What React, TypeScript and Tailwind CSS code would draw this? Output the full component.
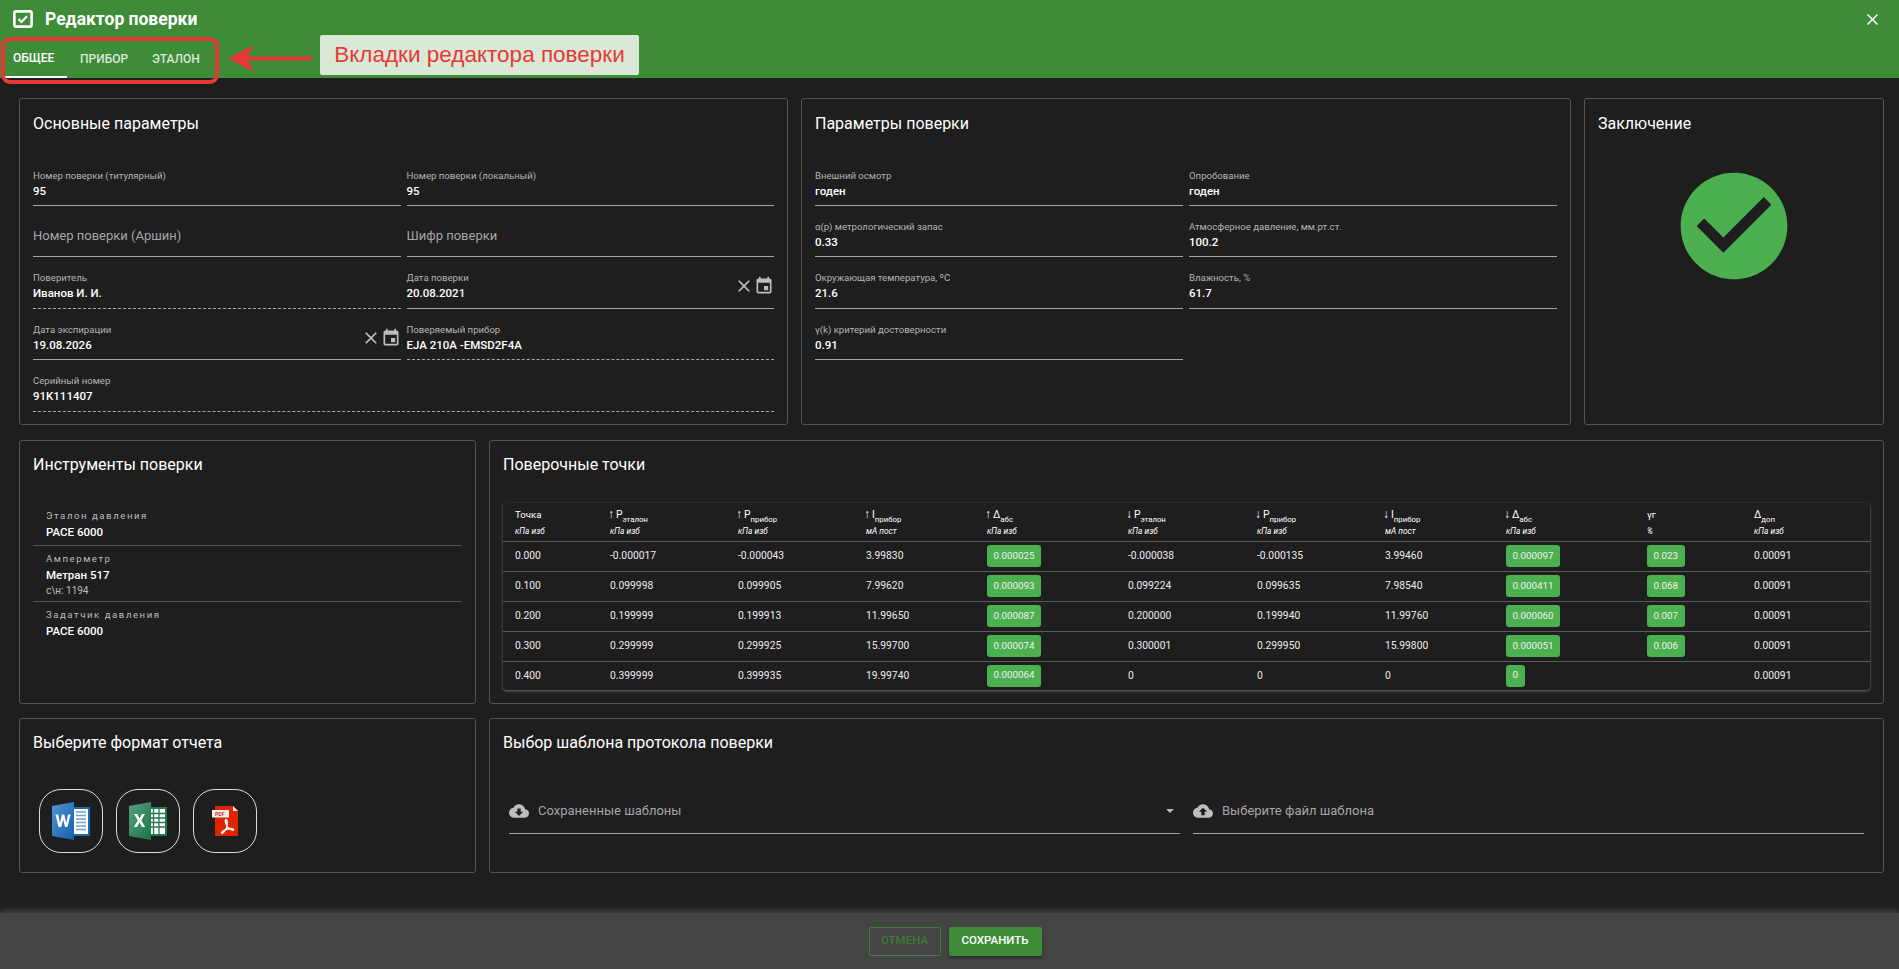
import React from "react";

const P = ({ className = "", title, children }: { className?: string; title: string; children?: React.ReactNode }) => (
  <section className={"rounded-[3px] border border-[#555555] px-[13px] " + className}>
    <h2 className="text-[16px] leading-[24px] text-white">{title}</h2>
    {children}
  </section>
);

const Clear = () => (
  <svg viewBox="0 0 24 24" className="h-[20px] w-[20px]" fill="#bdbdbd">
    <path d="M19 6.41 17.59 5 12 10.59 6.41 5 5 6.41 10.59 12 5 17.59 6.41 19 12 13.41 17.59 19 19 17.59 13.41 12z" />
  </svg>
);
const Cal = () => (
  <svg viewBox="0 0 24 24" className="h-[20px] w-[20px]" fill="#bdbdbd">
    <path d="M17 12h-5v5h5v-5zM16 1v2H8V1H6v2H5c-1.11 0-1.99.9-1.99 2L3 19c0 1.1.89 2 2 2h14c1.1 0 2-.9 2-2V5c0-1.1-.9-2-2-2h-1V1h-2zm3 18H5V8h14v11z" />
  </svg>
);

const F = ({ label, value, dashed, date, big, wide }: { label: string; value?: string; dashed?: boolean; date?: boolean; big?: boolean; wide?: boolean }) => (
  <div
    className={
      "relative h-[51.4px] border-b " +
      (dashed ? "border-dashed border-[#a8a8a8] " : "border-[#a3a3a3] ") +
      (wide ? "col-span-2" : "")
    }
  >
    {big ? (
      <div className="pt-[20px] text-[13px] leading-[20px] text-[#a6a6a6]">{label}</div>
    ) : (
      <>
        <div className="pt-[14px] text-[9.6px] leading-[14px] text-[#b5b5b5]">{label}</div>
        <div className="mt-[1px] text-[11.5px] font-medium leading-[14px] text-white">{value}</div>
      </>
    )}
    {date && (
      <div className="absolute right-0 top-[19px] flex items-center">
        <Clear />
        <Cal />
      </div>
    )}
  </div>
);

const Sub = ({ a, s, arrow }: { a?: string; s: string; arrow?: string }) => (
  <span>
    {arrow && <span className="ml-[-2px] mr-[2px] text-[12px] leading-[0]">{arrow}</span>}
    <span className="text-[10.4px]">{a}</span>
    <sub className="text-[7.8px] align-[-2px] leading-[0]">{s}</sub>
  </span>
);

const widths = ["w-[95px]", "w-[128px]", "w-[128px]", "w-[121px]", "w-[141px]", "w-[129px]", "w-[128px]", "w-[121px]", "w-[141px]", "w-[107px]", "w-[131px]"];

const heads: [React.ReactNode, string][] = [
  ["Точка", "кПа изб"],
  [<Sub arrow="↑" a="P" s="эталон" />, "кПа изб"],
  [<Sub arrow="↑" a="P" s="прибор" />, "кПа изб"],
  [<Sub arrow="↑" a="I" s="прибор" />, "мА пост"],
  [<Sub arrow="↑" a="Δ" s="абс" />, "кПа изб"],
  [<Sub arrow="↓" a="P" s="эталон" />, "кПа изб"],
  [<Sub arrow="↓" a="P" s="прибор" />, "кПа изб"],
  [<Sub arrow="↓" a="I" s="прибор" />, "мА пост"],
  [<Sub arrow="↓" a="Δ" s="абс" />, "кПа изб"],
  ["γг", "%"],
  [<Sub a="Δ" s="доп" />, "кПа изб"],
];

const rows = [
  ["0.000", "-0.000017", "-0.000043", "3.99830", "0.000025", "-0.000038", "-0.000135", "3.99460", "0.000097", "0.023", "0.00091"],
  ["0.100", "0.099998", "0.099905", "7.99620", "0.000093", "0.099224", "0.099635", "7.98540", "0.000411", "0.068", "0.00091"],
  ["0.200", "0.199999", "0.199913", "11.99650", "0.000087", "0.200000", "0.199940", "11.99760", "0.000060", "0.007", "0.00091"],
  ["0.300", "0.299999", "0.299925", "15.99700", "0.000074", "0.300001", "0.299950", "15.99800", "0.000051", "0.006", "0.00091"],
  ["0.400", "0.399999", "0.399935", "19.99740", "0.000064", "0", "0", "0", "0", "", "0.00091"],
];

const Word = () => (
  <svg viewBox="0 0 40 40" className="h-[40px] w-[40px]">
    <defs>
      <linearGradient id="wg" x1="0" y1="0" x2="1" y2="1">
        <stop offset="0" stopColor="#4f95d6" />
        <stop offset="1" stopColor="#1560a8" />
      </linearGradient>
    </defs>
    <rect x="21" y="6" width="18" height="29" fill="#1a6bb5" />
    <rect x="23" y="8" width="14" height="25" fill="#ffffff" />
    <path d="M25 11h10M25 14.500h10M25 18h10M25 21.500h10M25 25h10M25 28.500h10" stroke="#6f9fcf" strokeWidth="1.500" />
    <path d="M1 5 23 1v38L1 35z" fill="url(#wg)" />
    <path d="M4.500 13.500h2.700l1.700 8.500 2.100-8.500h2.200l2.100 8.500 1.700-8.500h2.600l-3.100 12.500h-2.500l-1.900-7.500-1.900 7.500H7.600z" fill="#fff" />
  </svg>
);
const Excel = () => (
  <svg viewBox="0 0 40 40" className="h-[40px] w-[40px]">
    <defs>
      <linearGradient id="xg" x1="0" y1="0" x2="1" y2="1">
        <stop offset="0" stopColor="#56a07d" />
        <stop offset="1" stopColor="#1b7347" />
      </linearGradient>
    </defs>
    <rect x="21" y="6" width="18" height="29" fill="#1f7a4d" />
    <rect x="23" y="8" width="14" height="25" fill="#ffffff" />
    <path d="M25.500 8v25M31 8v25M23 12.500h14M23 17h14M23 21.500h14M23 26h14" stroke="#1f7a4d" strokeWidth="1.300" />
    <path d="M1 5 23 1v38L1 35z" fill="url(#xg)" />
    <path d="M6 13h3.200l2.400 4.400 2.400-4.400H17l-3.700 6.200 3.900 6.800h-3.200l-2.500-4.700L9 26H5.900l3.900-6.800z" fill="#fff" />
  </svg>
);
const Pdf = () => (
  <svg viewBox="0 0 40 40" className="h-[40px] w-[40px]">
    <path d="M10 5h18l5 5v25H10z" fill="#e12400" />
    <path d="M28 5l5 5h-5z" fill="#eeeeee" />
    <rect x="7" y="9" width="17" height="7.500" fill="#eeeeee" />
    <text x="10" y="15" fontSize="5.200" fontWeight="700" fill="#c0392b" fontFamily="Roboto, sans-serif">PDF</text>
    <path d="M21 18.500c-1.300 0-.6 4 1.300 7 1.800 2.800 5.500 4.500 6.200 3.300.7-1.200-2.800-1.700-6-.8-3 .9-6.700 3-5.800 4.100.9 1 3.700-2.600 4.900-5.600 1-2.600.8-8-.6-8z" fill="none" stroke="#fff" strokeWidth="1.400" />
  </svg>
);

const CloudDown = () => (
  <svg viewBox="0 0 24 24" className="h-[20px] w-[20px] shrink-0" fill="#bdbdbd">
    <path d="M19.35 10.04C18.67 6.59 15.64 4 12 4 9.11 4 6.6 5.64 5.35 8.04 2.34 8.36 0 10.91 0 14c0 3.310 2.690 6 6 6h13c2.760 0 5-2.240 5-5 0-2.640-2.050-4.780-4.650-4.960zM17 13l-5 5-5-5h3V9h4v4h3z" />
  </svg>
);
const CloudUp = () => (
  <svg viewBox="0 0 24 24" className="h-[20px] w-[20px] shrink-0" fill="#bdbdbd">
    <path d="M19.35 10.04C18.67 6.59 15.64 4 12 4 9.11 4 6.6 5.64 5.35 8.04 2.34 8.36 0 10.91 0 14c0 3.310 2.690 6 6 6h13c2.760 0 5-2.240 5-5 0-2.640-2.050-4.780-4.650-4.960zM14 13v4h-4v-4H7l5-5 5 5h-3z" />
  </svg>
);

export default function App() {
  return (
    <div className="relative flex h-screen flex-col overflow-hidden bg-[#1e1e1e] font-['Roboto',sans-serif] text-white">
      <header className="h-[78px] shrink-0 bg-[#3f8c38]">
        <div className="flex h-[38px] items-center pl-[13px] pr-[17px]">
          <svg viewBox="0 0 20 18" className="h-[18px] w-[20px]" fill="none">
            <rect x="1.400" y="1.400" width="17.200" height="15.200" rx="1.500" stroke="#fff" strokeWidth="2.600" />
            <path d="M5.500 9 8.500 12 14 6.300" stroke="#fff" strokeWidth="2.200" />
          </svg>
          <h1 className="ml-[12px] text-[17.500px] font-bold">Редактор поверки</h1>
          <svg viewBox="0 0 24 24" className="ml-auto h-[19px] w-[19px]" fill="#fff">
            <path d="M19 6.41 17.59 5 12 10.59 6.41 5 5 6.41 10.59 12 5 17.59 6.41 19 12 13.41 17.59 19 19 17.59 13.41 12z" />
          </svg>
        </div>
        <nav className="ml-[5px] flex h-[40px] text-[12px] font-medium">
          <div className="flex h-full w-[62px] items-center border-b-2 border-white pl-[8px] pt-[2px] text-white">ОБЩЕЕ</div>
          <div className="flex h-full w-[72px] items-center pl-[13px] pt-[2px] text-[#d9e8d7]">ПРИБОР</div>
          <div className="flex h-full w-[72px] items-center pl-[13px] pt-[2px] text-[#d9e8d7]">ЭТАЛОН</div>
        </nav>
      </header>

      {/* аннотация */}
      <div className="absolute left-[1px] top-[37px] h-[47px] w-[218px] rounded-[9px] border-[4px] border-[#e53935]" />
      <svg className="absolute left-[228px] top-[45px]" width="84" height="27" viewBox="0 0 84 27">
        <path d="M0 13.500 26 0 19 13.500 26 27z" fill="#e53935" />
        <rect x="18" y="11.500" width="66" height="4" rx="1" fill="#e53935" />
      </svg>
      <div className="absolute left-[320px] top-[35px] flex h-[40px] w-[319px] items-center justify-center rounded-[2px] bg-[#d9e8d7] font-['Liberation_Sans',sans-serif] text-[22.500px] text-[#e53935]">
        Вкладки редактора поверки
      </div>

      <main className="min-h-0 flex-1 px-[19px] pt-[20px]">
        <div className="grid grid-cols-[769px_770px_300px] gap-x-[13px]">
          <P className="h-[327px] pt-[13px]" title="Основные параметры">
            <div className="mt-[18.600px] grid grid-cols-2 gap-x-[6px]">
              <F label="Номер поверки (титулярный)" value="95" />
              <F label="Номер поверки (локальный)" value="95" />
              <F big label="Номер поверки (Аршин)" />
              <F big label="Шифр поверки" />
              <F dashed label="Поверитель" value="Иванов И. И." />
              <F date label="Дата поверки" value="20.08.2021" />
              <F date label="Дата экспирации" value="19.08.2026" />
              <F dashed label="Поверяемый прибор" value="EJA 210A -EMSD2F4A" />
              <F dashed wide label="Серийный номер" value="91K111407" />
            </div>
          </P>
          <P className="h-[327px] pt-[13px]" title="Параметры поверки">
            <div className="mt-[18.600px] grid grid-cols-2 gap-x-[6px]">
              <F label="Внешний осмотр" value="годен" />
              <F label="Опробование" value="годен" />
              <F label="α(p) метрологический запас" value="0.33" />
              <F label="Атмосферное давление, мм.рт.ст." value="100.2" />
              <F label="Окружающая температура, ºC" value="21.6" />
              <F label="Влажность, %" value="61.7" />
              <F label="γ(k) критерий достоверности" value="0.91" />
            </div>
          </P>
          <P className="h-[327px] pt-[13px]" title="Заключение">
            <div className="mt-[25.500px] flex justify-center">
              <svg viewBox="0 0 24 24" className="h-[128px] w-[128px]" fill="#4caf50">
                <path d="M12 2C6.480 2 2 6.480 2 12s4.480 10 10 10 10-4.480 10-10S17.520 2 12 2zm-2 15-5-5 1.410-1.410L10 14.170l7.590-7.590L19 8l-9 9z" />
              </svg>
            </div>
          </P>
        </div>

        <div className="mt-[15px] grid grid-cols-[457px_1395px] gap-x-[13px]">
          <P className="h-[264px] pt-[12px]" title="Инструменты поверки">
            <div className="mt-[32px] text-[11.500px]">
              <div className="h-[37px] border-b border-[#555555] pl-[13px]">
                <div className="text-[9.600px] leading-[14px] tracking-[1.550px] text-[#bdbdbd]">Эталон давления</div>
                <div className="mt-[1px] font-medium leading-[16px]">PACE 6000</div>
              </div>
              <div className="h-[56px] border-b border-[#555555] pl-[13px] pt-[6px]">
                <div className="text-[9.600px] leading-[14px] tracking-[1.550px] text-[#bdbdbd]">Амперметр</div>
                <div className="mt-[1px] font-medium leading-[16px]">Метран 517</div>
                <div className="text-[10px] leading-[15px] text-[#bdbdbd]">с\н: 1194</div>
              </div>
              <div className="pl-[13px] pt-[6px]">
                <div className="text-[9.600px] leading-[14px] tracking-[1.550px] text-[#bdbdbd]">Задатчик давления</div>
                <div className="mt-[1px] font-medium leading-[16px]">PACE 6000</div>
              </div>
            </div>
          </P>
          <P className="h-[264px] pt-[12px]" title="Поверочные точки">
            <div className="mt-[26px] overflow-hidden rounded-[4px] shadow-[0_1px_3px_rgba(255,255,255,0.35)]">
              <table className="w-[1370px] table-fixed border-collapse text-left">
                <thead>
                  <tr className="h-[38px] border-b border-[#5a5a5a]">
                    {heads.map((h, i) => (
                      <th key={i} className={widths[i] + " pl-[12px] pt-[5px] align-top font-normal"}>
                        <div className="h-[14px] overflow-visible text-[9.600px] leading-[14px] text-white">{h[0]}</div>
                        <div className="mt-[3px] text-[8.300px] italic leading-[12px] text-white">{h[1]}</div>
                      </th>
                    ))}
                  </tr>
                </thead>
                <tbody>
                  {rows.map((r, ri) => (
                    <tr key={ri} className="h-[30px] border-b border-[#5a5a5a] text-[10.300px] text-[#ededed] last:h-[29px] last:border-b-0">
                      {r.map((c, i) => (
                        <td key={i} className="pl-[12px]">
                          {(i === 4 || i === 8 || (i === 9 && c)) ? (
                            <span className="inline-flex h-[22px] items-center rounded-[3px] bg-[#4caf50] px-[6.500px] text-[9.800px] text-[#f2f2f2]">{c}</span>
                          ) : (
                            c
                          )}
                        </td>
                      ))}
                    </tr>
                  ))}
                </tbody>
              </table>
            </div>
          </P>
        </div>

        <div className="mt-[14px] grid grid-cols-[457px_1395px] gap-x-[13px]">
          <P className="h-[155px] pt-[12px]" title="Выберите формат отчета">
            <div className="ml-[6px] mt-[34px] flex gap-[13px]">
              {[<Word key="w" />, <Excel key="e" />, <Pdf key="p" />].map((ic, i) => (
                <button key={i} className="flex h-[64px] w-[64px] items-center justify-center rounded-[22px] border border-[#dddddd]">
                  {ic}
                </button>
              ))}
            </div>
          </P>
          <P className="h-[155px] pt-[12px]" title="Выбор шаблона протокола поверки">
            <div className="mx-[6px] mt-[40px] grid grid-cols-2 gap-x-[13px]">
              <div className="flex h-[39px] items-start gap-[9px] border-b border-[#a3a3a3] pt-[6px] text-[13px] text-[#a6a6a6]">
                <CloudDown />
                <span className="leading-[20px]">Сохраненные шаблоны</span>
                <svg viewBox="0 0 10 5" className="ml-auto mr-[6px] mt-[8px] h-[4px] w-[8px]" fill="#bdbdbd"><path d="M0 0h10L5 5z" /></svg>
              </div>
              <div className="flex h-[39px] items-start gap-[9px] border-b border-[#a3a3a3] pt-[6px] text-[13px] text-[#a6a6a6]">
                <CloudUp />
                <span className="leading-[20px]">Выберите файл шаблона</span>
              </div>
            </div>
          </P>
        </div>
      </main>

      <footer className="flex h-[56px] shrink-0 items-center justify-center gap-[8px] bg-[#444444] pl-[11px] shadow-[0_-3px_6px_rgba(90,90,90,0.6)]">
        <button className="h-[29px] w-[72px] rounded-[2px] border border-[#3a7f34] text-[11.500px] font-medium text-[#3a7f34]">ОТМЕНА</button>
        <button className="h-[29px] w-[93px] rounded-[2px] bg-[#3f8c38] text-[11.500px] font-medium text-white shadow-[0_2px_3px_rgba(0,0,0,0.4)]">СОХРАНИТЬ</button>
      </footer>
    </div>
  );
}
